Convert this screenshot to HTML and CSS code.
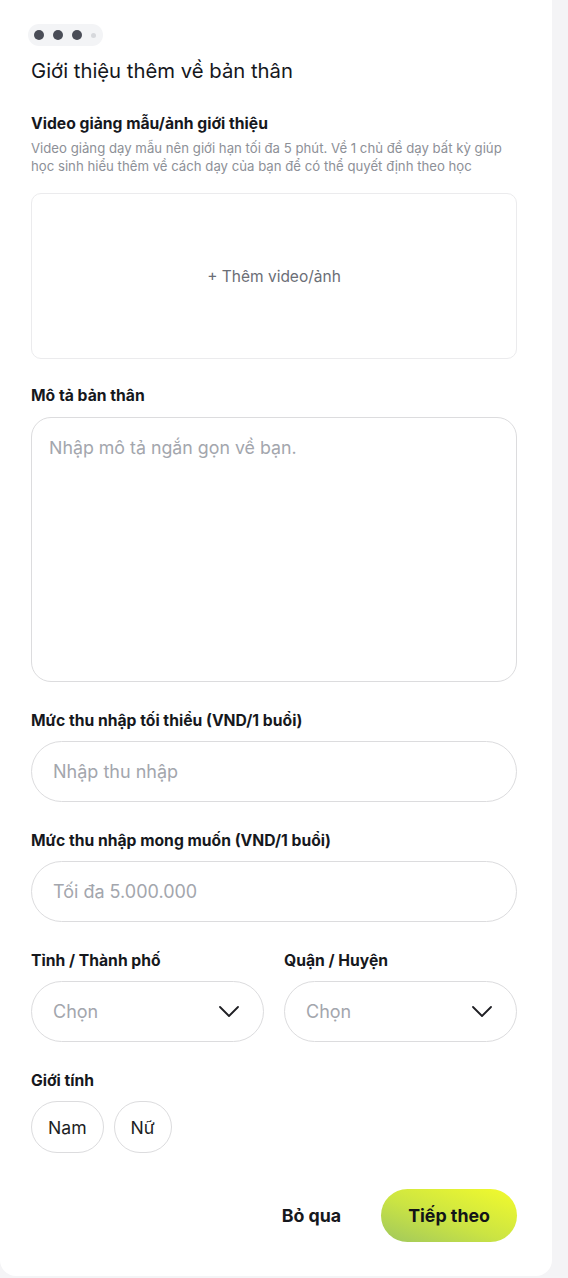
FILE: index.html
```html
<!DOCTYPE html>
<html lang="vi">
<head>
<meta charset="utf-8">
<title>Giới thiệu thêm về bản thân</title>
<link rel="stylesheet" href="styles.css">
</head>
<body>
<main class="card">
  <div class="steps">
    <span class="dot"></span><span class="dot"></span><span class="dot"></span><span class="dot dot-small"></span>
  </div>
  <h1 class="title">Giới thiệu thêm về bản thân</h1>

  <section class="field field-first">
    <h2 class="label">Video giảng mẫu/ảnh giới thiệu</h2>
    <p class="hint">Video giảng dạy mẫu nên giới hạn tối đa 5 phút. Về 1 chủ đề dạy bất kỳ giúp học sinh hiểu thêm về cách dạy của bạn để có thể quyết định theo học</p>
    <button class="upload" type="button">+ Thêm video/ảnh</button>
  </section>

  <section class="field field-desc">
    <h2 class="label">Mô tả bản thân</h2>
    <textarea class="textarea" placeholder="Nhập mô tả ngắn gọn về bạn."></textarea>
  </section>

  <section class="field">
    <h2 class="label">Mức thu nhập tối thiểu (VND/1 buổi)</h2>
    <input class="input" type="text" placeholder="Nhập thu nhập">
  </section>

  <section class="field">
    <h2 class="label">Mức thu nhập mong muốn (VND/1 buổi)</h2>
    <input class="input" type="text" placeholder="Tối đa 5.000.000">
  </section>

  <div class="field row">
    <section class="col">
      <h2 class="label">Tỉnh / Thành phố</h2>
      <div class="select">
        <span class="select-text">Chọn</span>
        <svg class="chevron" width="20" height="11" viewBox="0 0 20 11"><path d="M1 1l9 9 9-9" fill="none" stroke="#1f1f24" stroke-width="1.8" stroke-linecap="round" stroke-linejoin="round"/></svg>
      </div>
    </section>
    <section class="col">
      <h2 class="label">Quận / Huyện</h2>
      <div class="select">
        <span class="select-text">Chọn</span>
        <svg class="chevron" width="20" height="11" viewBox="0 0 20 11"><path d="M1 1l9 9 9-9" fill="none" stroke="#1f1f24" stroke-width="1.8" stroke-linecap="round" stroke-linejoin="round"/></svg>
      </div>
    </section>
  </div>

  <section class="field">
    <h2 class="label">Giới tính</h2>
    <div class="chips">
      <button class="chip" type="button">Nam</button>
      <button class="chip" type="button">Nữ</button>
    </div>
  </section>

  <div class="actions">
    <button class="skip" type="button">Bỏ qua</button>
    <button class="next" type="button">Tiếp theo</button>
  </div>
</main>
</body>
</html>
```

FILE: styles.css
```css
* { box-sizing: border-box; }

html, body {
  margin: 0;
  padding: 0;
}

body {
  background: #f4f4f6;
  font-family: Inter, "Noto Sans", "Liberation Sans", sans-serif;
  color: #16181d;
}

.card {
  width: 552px;
  min-height: 1276px;
  background: #ffffff;
  border-radius: 0 0 16px 16px;
  padding: 24px 35px 34px 31px;
  display: flex;
  flex-direction: column;
}

.steps {
  align-self: flex-start;
  display: flex;
  align-items: center;
  gap: 9px;
  height: 22px;
  padding: 0 7px 0 6px;
  border-radius: 11px;
  background: #f3f4f6;
  margin-left: -3px;
}

.dot {
  width: 10px;
  height: 10px;
  border-radius: 50%;
  background: #4a4d57;
}

.dot-small {
  width: 5px;
  height: 5px;
  background: #d6d8dc;
}

.title {
  margin: 13px 0 0;
  font-size: 20.3px;
  line-height: 24px;
  font-weight: 400;
  color: #15171c;
}

.field {
  margin-top: 29px;
}

.field-first {
  margin-top: 31px;
}

.field-desc {
  margin-top: 27px;
}

.label {
  margin: 0 0 10px;
  font-size: 15.7px;
  line-height: 20px;
  font-weight: 700;
  color: #16181d;
}

.field-first .label {
  margin-bottom: 5px;
}

.field-desc .label {
  margin-bottom: 11px;
}

.hint {
  margin: 0;
  font-size: 13.2px;
  line-height: 18px;
  color: #8d9097;
}

.upload {
  display: flex;
  align-items: center;
  justify-content: center;
  width: 100%;
  height: 166px;
  margin-top: 18px;
  border: 1px solid #ebebed;
  border-radius: 10px;
  background: #ffffff;
  font-family: inherit;
  font-size: 15.5px;
  color: #6b6e76;
  cursor: pointer;
}

.textarea {
  display: block;
  width: 100%;
  height: 265px;
  margin: 0;
  padding: 18px 17px;
  border: 1px solid #dcdcde;
  border-radius: 20px;
  resize: none;
  font-family: inherit;
  font-size: 17.8px;
  line-height: 24px;
  color: #16181d;
  outline: none;
}

.textarea::placeholder,
.input::placeholder {
  color: #a3a6ad;
}

.input {
  display: block;
  width: 100%;
  height: 61px;
  margin: 0;
  padding: 0 21px;
  border: 1px solid #dcdcde;
  border-radius: 31px;
  font-family: inherit;
  font-size: 18px;
  color: #16181d;
  outline: none;
}

.row {
  display: grid;
  grid-template-columns: 1fr 1fr;
  column-gap: 20px;
}

.select {
  display: flex;
  align-items: center;
  justify-content: space-between;
  height: 61px;
  padding: 0 24px 0 21px;
  border: 1px solid #dcdcde;
  border-radius: 31px;
}

.select-text {
  font-size: 18px;
  color: #a3a6ad;
}

.chevron {
  display: block;
}

.chips {
  display: flex;
  gap: 10px;
}

.chip {
  height: 52px;
  padding: 0 16px;
  border: 1px solid #dcdcde;
  border-radius: 26px;
  background: #ffffff;
  font-family: inherit;
  font-size: 17.6px;
  color: #1c1e23;
  cursor: pointer;
}

.actions {
  display: flex;
  justify-content: flex-end;
  align-items: center;
  gap: 40px;
  margin-top: 36px;
}

.skip {
  border: none;
  background: none;
  padding: 0;
  font-family: inherit;
  font-size: 17.8px;
  font-weight: 700;
  color: #16181d;
  cursor: pointer;
}

.next {
  height: 53px;
  padding: 0 27px;
  border: none;
  border-radius: 27px;
  background: linear-gradient(20deg, #9fc75e 0%, #cbe443 45%, #f3fb2c 100%);
  font-family: inherit;
  font-size: 17.8px;
  font-weight: 700;
  color: #121418;
  cursor: pointer;
}
```
